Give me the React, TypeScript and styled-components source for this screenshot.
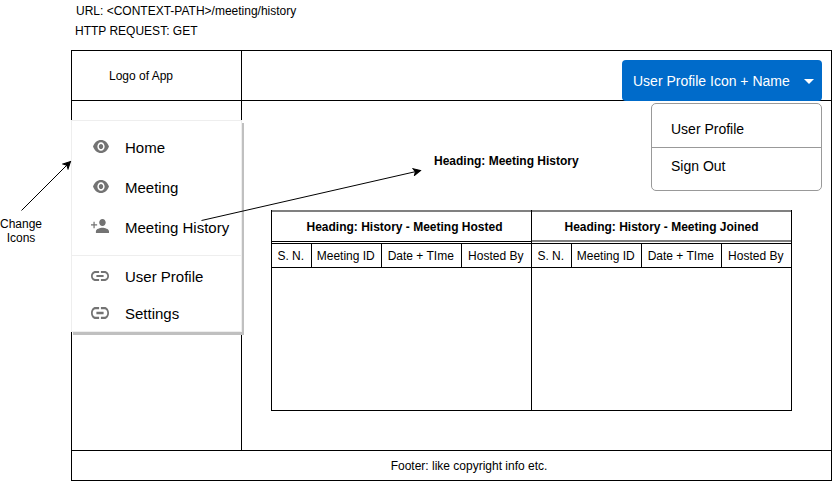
import React from "react";
import styled, { createGlobalStyle } from "styled-components";

const GlobalStyle = createGlobalStyle`
  *, *::before, *::after { box-sizing: border-box; }
  body {
    margin: 0;
    background: #fff;
    color: #000;
    font: 12px/14px "Liberation Sans", Arial, Helvetica, sans-serif;
    overflow: hidden;
  }
`;

const Page = styled.div`
  position: relative;
  width: 832px;
  height: 481px;
  overflow: hidden;
`;

const Notes = styled.div`
  height: 50px;
  padding: 1px 0 0 75px;
`;

const Note = styled.div<{ $indent?: number }>`
  line-height: 20px;
  padding-left: ${(p) => p.$indent ?? 0}px;
`;

const Frame = styled.div`
  width: 761px;
  height: 431px;
  margin-left: 71px;
  border: 1px solid #000;
  display: grid;
  grid-template-columns: 170px 1fr;
  grid-template-rows: 50px 350px 29px;
`;

const LogoCell = styled.div`
  border-right: 1px solid #000;
  border-bottom: 1px solid #000;
  display: flex;
  align-items: center;
  justify-content: center;
  padding-right: 31px;
`;

const HeaderCell = styled.div`
  position: relative;
  border-bottom: 1px solid #000;
  display: flex;
  justify-content: flex-end;
  align-items: flex-end;
  padding-right: 9.5px;
`;

const ProfileButton = styled.button`
  width: 200px;
  height: 41px;
  flex: none;
  margin-bottom: -1px;
  border: 0;
  border-radius: 4px;
  background: #006bca;
  color: #fff;
  font: 14px/16px "Liberation Sans", Arial, sans-serif;
  padding: 1px 7.5px 0 11.5px;
  display: flex;
  align-items: center;
  justify-content: space-between;
  white-space: nowrap;
`;

const ProfileMenu = styled.div`
  position: absolute;
  top: 52px;
  right: 9px;
  width: 171px;
  height: 88px;
  border: 1px solid #999;
  border-radius: 5px;
  background: #fff;
  font-size: 14px;
`;

const ProfileItem = styled.div<{ $height: number; $divided?: boolean }>`
  height: ${(p) => p.$height}px;
  padding-left: 19px;
  display: flex;
  align-items: center;
  padding-top: ${(p) => (p.$divided ? 6 : 0)}px;
  padding-bottom: ${(p) => (p.$divided ? 0 : 2)}px;
  border-bottom: ${(p) => (p.$divided ? "1px solid #999" : "0")};
`;

const SideCell = styled.div`
  position: relative;
  border-right: 1px solid #000;
  border-bottom: 1px solid #000;
`;

const SideMenu = styled.nav`
  position: absolute;
  top: 19px;
  left: -1px;
  width: 171px;
  height: 212px;
  border: 1px solid #eee;
  background: #fff;
  box-shadow: 2px 3px 0 #c0c0c0;
  padding-top: 7px;
  font-size: 15px;
`;

const MenuGroup = styled.div<{ $divided?: boolean }>`
  padding-bottom: ${(p) => (p.$divided ? 7 : 0)}px;
  border-bottom: ${(p) => (p.$divided ? "1px solid #eee" : "0")};
  padding-top: ${(p) => (p.$divided ? 0 : 2)}px;
`;

const MenuItem = styled.div<{ $height: number }>`
  height: ${(p) => p.$height}px;
  display: grid;
  grid-template-columns: 53px 1fr;
  align-items: center;
  white-space: nowrap;
`;

const IconSlot = styled.span<{ $gap: number; $lift: number }>`
  display: flex;
  justify-content: center;
  padding: 0 0 ${(p) => p.$lift}px ${(p) => p.$gap}px;
`;

const Glyph = styled.svg`
  display: block;
  flex: none;
  fill: #737373;
`;

const Main = styled.main`
  border-bottom: 1px solid #000;
  padding-left: 29px;
`;

const Heading = styled.h1`
  margin: 0;
  height: 109px;
  padding: 53px 0 0 163px;
  font-size: 12px;
  line-height: 14px;
`;

const Tables = styled.div`
  display: flex;
  width: 521px;
  height: 201px;
  border-left: 1px solid #000;
`;

const Table = styled.section`
  width: 260px;
  border-right: 1px solid #000;
  border-bottom: 1px solid #000;
`;

const TableTitle = styled.h2<{ $rule: string; $shift: number }>`
  margin: 0;
  height: 32px;
  padding: 1px 0 0 ${(p) => p.$shift}px;
  border-top: 2px solid #808080;
  border-bottom: ${(p) => p.$rule};
  font-size: 12px;
  display: flex;
  align-items: center;
  justify-content: center;
`;

const Columns = styled.div`
  height: 25px;
  margin-top: 1px;
  border-top: 1px solid #000;
  border-bottom: 1px solid #000;
  display: grid;
  grid-template-columns: 40px 70px 80px 69px;
`;

const Column = styled.div`
  display: flex;
  align-items: center;
  justify-content: center;
  padding: 1px 1.5px 0 0;
  white-space: nowrap;
  &:not(:last-child) { border-right: 1px solid #000; }
`;

const Footer = styled.footer`
  grid-column: 1 / -1;
  display: flex;
  align-items: center;
  justify-content: center;
  padding: 1px 0 0 35px;
`;

const IconNote = styled.div`
  position: absolute;
  left: 0;
  top: 217px;
  width: 42px;
  text-align: center;
`;

const Arrows = styled.svg`
  position: absolute;
  inset: 0;
  pointer-events: none;
`;

const EyeIcon = () => (
  <Glyph width="16" height="13" viewBox="1 4.5 22 15" preserveAspectRatio="none">
    <path d="M12 4.5C7 4.5 2.73 7.61 1 12c1.73 4.39 6 7.5 11 7.5s9.27-3.11 11-7.5c-1.73-4.39-6-7.5-11-7.5zM12 17c-2.76 0-5-2.24-5-5s2.24-5 5-5 5 2.24 5 5-2.24 5-5 5zm0-8c-1.66 0-3 1.34-3 3s1.34 3 3 3 3-1.34 3-3-1.34-3-3-3z" />
  </Glyph>
);

const PersonAddIcon = () => (
  <Glyph width="18" height="14" viewBox="1 4 22 16" preserveAspectRatio="none">
    <path d="M15 12c2.21 0 4-1.79 4-4s-1.79-4-4-4-4 1.79-4 4 1.79 4 4 4zM5.5 10V7H4v3H1v1.5h3v3h1.5v-3h3V10H5.5zM15 14c-2.67 0-8 1.34-8 4v2h16v-2c0-2.66-5.33-4-8-4z" />
  </Glyph>
);

const LinkIcon = ({ height }: { height: number }) => (
  <Glyph width="18" height={height} viewBox="2 7 20 10" preserveAspectRatio="none">
    <path d="M3.9 12c0-1.71 1.39-3.1 3.1-3.1h4V7H7c-2.76 0-5 2.24-5 5s2.24 5 5 5h4v-1.9H7c-1.71 0-3.1-1.39-3.1-3.1zM8 13h8v-2H8v2zm9-6h-4v1.9h4c1.71 0 3.1 1.39 3.1 3.1s-1.39 3.1-3.1 3.1h-4V17h4c2.76 0 5-2.24 5-5s-2.24-5-5-5z" />
  </Glyph>
);

const CaretIcon = () => (
  <svg width="10" height="5" viewBox="0 0 10 5">
    <path d="M0 0h10L5 5z" fill="#fff" />
  </svg>
);

const mainItems = [
  { label: "Home", icon: <EyeIcon />, gap: 5, lift: 3 },
  { label: "Meeting", icon: <EyeIcon />, gap: 5, lift: 3 },
  { label: "Meeting History", icon: <PersonAddIcon />, gap: 3, lift: 4 },
];

const accountItems = [
  { label: "User Profile", icon: <LinkIcon height={10} />, gap: 3, lift: 2 },
  { label: "Settings", icon: <LinkIcon height={12} />, gap: 3, lift: 1 },
];

const columns = ["S. N.", "Meeting ID", "Date + TIme", "Hosted By"];

const tables = [
  { title: "Heading: History - Meeting Hosted", rule: "1px solid #000", shift: 6 },
  { title: "Heading: History - Meeting Joined", rule: "2px solid #808080", shift: 0 },
];

export default function App() {
  return (
    <Page>
      <GlobalStyle />
      <Notes>
        <Note $indent={1}>URL: &lt;CONTEXT-PATH&gt;/meeting/history</Note>
        <Note>HTTP REQUEST: GET</Note>
      </Notes>
      <Frame>
        <LogoCell>Logo of App</LogoCell>
        <HeaderCell>
          <ProfileButton>
            User Profile Icon + Name
            <CaretIcon />
          </ProfileButton>
          <ProfileMenu>
            <ProfileItem $height={44} $divided>User Profile</ProfileItem>
            <ProfileItem $height={37}>Sign Out</ProfileItem>
          </ProfileMenu>
        </HeaderCell>
        <SideCell>
          <SideMenu>
            <MenuGroup $divided>
              {mainItems.map((item) => (
                <MenuItem key={item.label} $height={40}>
                  <IconSlot $gap={item.gap} $lift={item.lift}>{item.icon}</IconSlot>
                  {item.label}
                </MenuItem>
              ))}
            </MenuGroup>
            <MenuGroup>
              {accountItems.map((item) => (
                <MenuItem key={item.label} $height={37}>
                  <IconSlot $gap={item.gap} $lift={item.lift}>{item.icon}</IconSlot>
                  {item.label}
                </MenuItem>
              ))}
            </MenuGroup>
          </SideMenu>
        </SideCell>
        <Main>
          <Heading>Heading: Meeting History</Heading>
          <Tables>
            {tables.map((table) => (
              <Table key={table.title}>
                <TableTitle $rule={table.rule} $shift={table.shift}>{table.title}</TableTitle>
                <Columns>
                  {columns.map((name) => (
                    <Column key={name}>{name}</Column>
                  ))}
                </Columns>
              </Table>
            ))}
          </Tables>
        </Main>
        <Footer>Footer: like copyright info etc.</Footer>
      </Frame>
      <IconNote>
        Change
        <br />
        Icons
      </IconNote>
      <Arrows width="832" height="481" viewBox="0 0 832 481">
        <defs>
          <marker id="tip" markerWidth="9" markerHeight="9" refX="8" refY="4.5" orient="auto" markerUnits="userSpaceOnUse">
            <path d="M8 4.5L1 8l1.75-3.5L1 1z" stroke="#000" />
          </marker>
        </defs>
        <path d="M21.5 210.5L70.5 161.5" stroke="#000" fill="none" markerEnd="url(#tip)" />
        <path d="M201.5 220.5L420.5 170.5" stroke="#000" fill="none" markerEnd="url(#tip)" />
      </Arrows>
    </Page>
  );
}
